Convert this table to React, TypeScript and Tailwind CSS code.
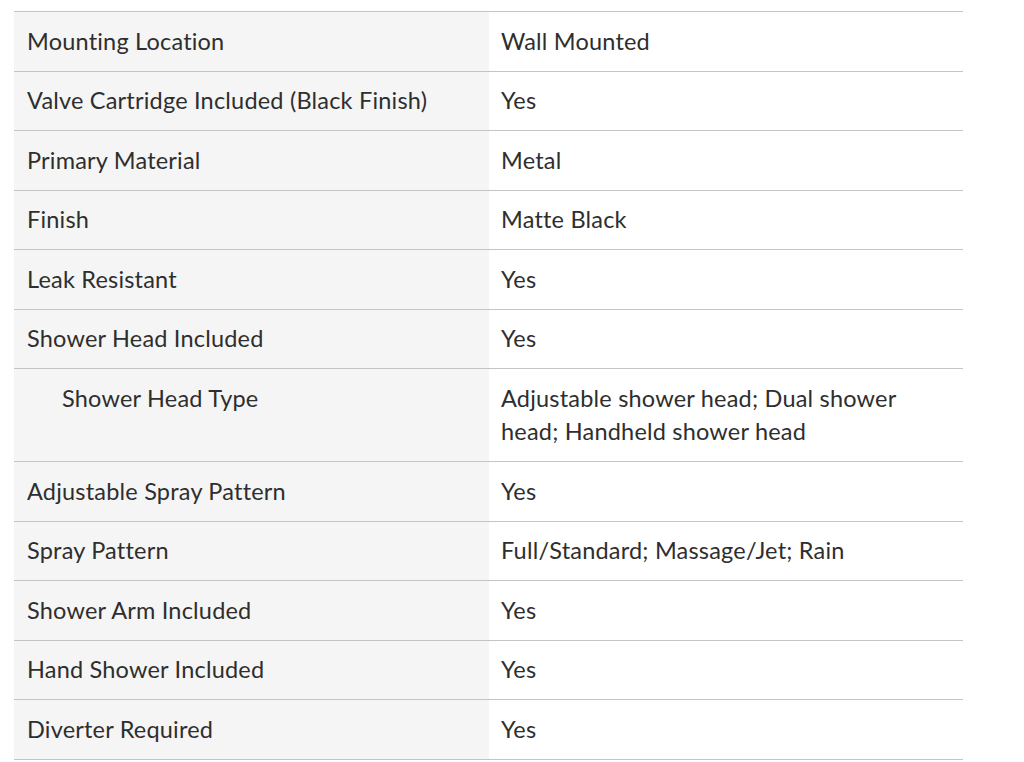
const rows: { label: string; value: string; indent?: boolean }[] = [
  { label: "Mounting Location", value: "Wall Mounted" },
  { label: "Valve Cartridge Included (Black Finish)", value: "Yes" },
  { label: "Primary Material", value: "Metal" },
  { label: "Finish", value: "Matte Black" },
  { label: "Leak Resistant", value: "Yes" },
  { label: "Shower Head Included", value: "Yes" },
  {
    label: "Shower Head Type",
    value: "Adjustable shower head; Dual shower head; Handheld shower head",
    indent: true,
  },
  { label: "Adjustable Spray Pattern", value: "Yes" },
  { label: "Spray Pattern", value: "Full/Standard; Massage/Jet; Rain" },
  { label: "Shower Arm Included", value: "Yes" },
  { label: "Hand Shower Included", value: "Yes" },
  { label: "Diverter Required", value: "Yes" },
];

export default function App() {
  return (
    <div className="min-h-[762px] bg-white pt-[11px] pl-[14px] font-['Lato',sans-serif] text-[23.5px] tracking-[0.2px] text-[#2e2e2e]">
      <div className="w-[949px] border-t border-[#c4c4c4]">
        {rows.map((row) => (
          <div key={row.label} className="grid grid-cols-[475px_1fr] border-b border-[#c4c4c4]">
            <div
              className={`bg-[#f5f5f5] py-[12.5px] leading-[33.5px] ${row.indent ? "pl-[48px]" : "pl-[13px]"}`}
            >
              {row.label}
            </div>
            <div className="py-[12.5px] pl-3 pr-10 leading-[33.5px]">{row.value}</div>
          </div>
        ))}
      </div>
    </div>
  );
}
